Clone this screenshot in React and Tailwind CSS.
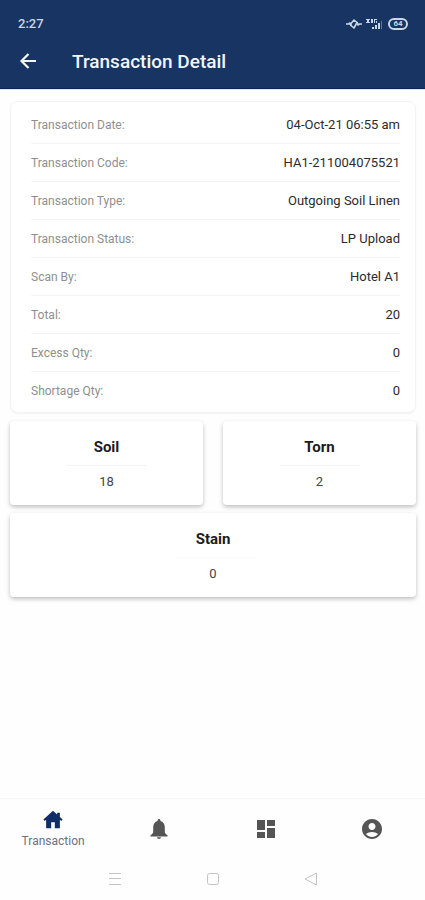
import { MdAccountCircle, MdDashboard } from "react-icons/md";

const details = [
  { label: "Transaction Date:", value: "04-Oct-21 06:55 am" },
  { label: "Transaction Code:", value: "HA1-211004075521" },
  { label: "Transaction Type:", value: "Outgoing Soil Linen" },
  { label: "Transaction Status:", value: "LP Upload" },
  { label: "Scan By:", value: "Hotel A1" },
  { label: "Total:", value: "20" },
  { label: "Excess Qty:", value: "0" },
  { label: "Shortage Qty:", value: "0" },
];

// Home with a chimney
function HomeIcon({ size }) {
  return (
    <svg width={size} height={size} viewBox="0 0 24 24" fill="currentColor">
      <path d="M12 2L1.500 11.500 3 13l1.500-1.200V21H10v-6.500h4V21h5.500v-9.200L21 13l1.500-1.500L19.500 8.800V4H16.500v2.100z" />
    </svg>
  );
}

function BellIcon({ size }) {
  return (
    <svg width={size} height={size} viewBox="0 0 24 24" fill="currentColor">
      <path d="M12 2c-.8 0-1.400.6-1.400 1.400v.5C7.800 4.600 6.200 7 6.200 10v5c0 1.200-1 2-2.700 3.300V19.500h17v-1.200c-1.700-1.300-2.700-2.100-2.700-3.300v-5c0-3-1.600-5.400-4.400-6.100v-.5C13.400 2.600 12.800 2 12 2zM10 20.300c.2 1 1 1.700 2 1.700s1.800-.7 2-1.700z" />
    </svg>
  );
}

const tabs = [
  { name: "Transaction", icon: HomeIcon, active: true },
  { name: "Notifications", icon: BellIcon },
  { name: "Dashboard", icon: MdDashboard },
  { name: "Account", icon: MdAccountCircle },
];

function StatusBar() {
  return (
    <div className="flex h-11 items-center justify-between pl-[18px] pr-[17px] pt-1 text-[#c9d6e8]">
      <span className="text-[13px] font-medium">2:27</span>
      <div className="flex items-center gap-1">
        {/* Vibrate */}
        <svg width="16" height="12" viewBox="0 0 16 12" fill="none" stroke="currentColor" strokeWidth="1.6" strokeLinejoin="round">
          <path d="M0 6h2.500L4 5l1 3M11 4l1 3 1.500-1H16" />
          <path d="M5 5.500L8 2l3 2.500L8 10 5 7.500z" />
        </svg>
        {/* Signal */}
        <svg width="18" height="12" viewBox="0 0 18 12" fill="currentColor">
          <path d="M0 1h4v1H0zM1 2h2v2H1zM0 4h4v1H0zM5 1h2v4H5zM8 1h3v1H8zM8 2h1v3H8zM10 3h1v2h-1zM6 9h2v2H6zM9 7h2v4H9zM12 5h2v6h-2z" />
          <path d="M15 3h1v8h-1z" opacity="0.4" />
        </svg>
        {/* Battery */}
        <span className="flex h-3 w-5 items-center justify-center rounded-md border-2 border-current text-[8px] font-bold leading-none">
          64
        </span>
      </div>
    </div>
  );
}

function CountCard({ title, count, className = "", lineClassName = "border-gray-100" }) {
  return (
    <div
      className={`flex h-[84px] flex-col items-center rounded bg-white pt-4 shadow-[0_2px_4px_rgba(0,0,0,0.25)] ${className}`}
    >
      <h2 className="text-[15px] leading-5 font-bold text-[#1c1c1c]">{title}</h2>
      <hr className={`mt-2 mb-2 w-20 ${lineClassName}`} />
      <p className="text-[13px] leading-4 text-[#444]">{count}</p>
    </div>
  );
}

export default function App() {
  return (
    <div className="flex min-h-screen flex-col bg-[#fefefe] font-[Roboto,sans-serif]">
      <header className="h-[89px] border-b border-[#0c2454] bg-[#183462] shadow-[0_1px_0_#dde5fa]">
        <StatusBar />
        <div className="flex h-9 items-center gap-[34px] pl-[18px] text-[#f2f5fa]">
          <button aria-label="Back">
            <svg width="20" height="20" viewBox="0 0 20 20" fill="none" stroke="currentColor" strokeWidth="2.2">
              <path d="M18 9H4M10.500 2L3.500 9l7 7" />
            </svg>
          </button>
          <h1 className="text-[19px] font-medium">Transaction Detail</h1>
        </div>
      </header>

      <main className="flex-1 pt-3 pr-[9px] pl-[10px]">
        {/* Details */}
        <dl className="rounded-lg border border-gray-100 bg-white pt-1 pr-[15px] pb-[2px] pl-5 shadow-xs">
          {details.map((d) => (
            <div
              key={d.label}
              className="flex h-[38px] items-center justify-between border-b border-gray-100 last:border-b-0"
            >
              <dt className="text-[12px] leading-5 text-[#8f8f8f]">{d.label}</dt>
              <dd className="text-[13px] leading-5 text-[#2c2c2c]">{d.value}</dd>
            </div>
          ))}
        </dl>

        {/* Counts */}
        <div className="mt-2 grid grid-cols-2 gap-x-5 gap-y-2">
          <CountCard title="Soil" count={18} />
          <CountCard title="Torn" count={2} />
          <CountCard title="Stain" count={0} className="col-span-2" lineClassName="border-[#fbfbfb]" />
        </div>
      </main>

      <nav className="grid h-[60px] grid-cols-4 border-t border-[#f7f7f7]">
        {tabs.map(({ name, icon: Icon, active }) => (
          <button
            key={name}
            aria-label={name}
            className={`flex flex-col items-center justify-center ${active ? "pt-[2px] text-[#0f2d66]" : "text-[#555]"}`}
          >
            <Icon size={active ? 22 : 24} />
            {active && <span className="text-[12px] leading-5 text-[#6b7280]">{name}</span>}
          </button>
        ))}
      </nav>

      {/* System navigation */}
      <div className="flex h-[42px] items-center justify-center gap-[84px] text-[#c4c4c4]">
        <svg width="14" height="14" viewBox="0 0 14 14" fill="none" stroke="currentColor">
          <path d="M1 1.500h12M1 6.500h12M1 12.500h12" />
        </svg>
        <svg width="14" height="14" viewBox="0 0 14 14" fill="none" stroke="currentColor">
          <rect x="1.500" y="1.500" width="11" height="11" rx="2" />
        </svg>
        <svg width="14" height="14" viewBox="0 0 14 14" fill="none" stroke="currentColor">
          <path d="M12.500 1v12L1 7z" strokeLinejoin="round" />
        </svg>
      </div>
    </div>
  );
}
